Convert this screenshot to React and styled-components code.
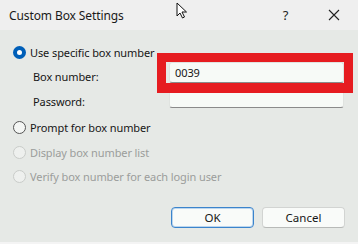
import React from "react";
import styled, { createGlobalStyle } from "styled-components";

const Global = createGlobalStyle`
  html, body { margin: 0; padding: 0; background: #f4f4f4; overflow: hidden; }
  body { font-family: "Noto Sans", "Open Sans", sans-serif; font-size: 11px; letter-spacing: -0.1px; color: #161616; }
`;

const Win = styled.div`
  position: relative;
  width: 372px;
  height: 242px;
  background: #e6e9e6;
  box-shadow: 0 1px 2px rgba(0, 0, 0, 0.25);
  display: flex;
  flex-direction: column;
`;

const TitleBar = styled.div`
  height: 30px;
  background: #efefef;
  display: flex;
  align-items: center;
  padding-left: 9px;
  box-sizing: border-box;
`;

const Title = styled.div`
  flex: 1;
  font-size: 12px;
  color: #1a1a1a;
  letter-spacing: -0.1px;
`;

const Caption = styled.div`
  width: ${(p) => p.$w}px;
  height: 30px;
  display: flex;
  align-items: center;
  justify-content: center;
  color: #222;
  font-size: 13px;
`;

const Body = styled.div`
  flex: 1;
  padding: 14px 0 0 13px;
  display: flex;
  flex-direction: column;
`;

const RadioRow = styled.label`
  display: flex;
  align-items: center;
  height: 16px;
  gap: 4px;
  margin-top: ${(p) => p.$mt || 0}px;
  color: ${(p) => (p.$disabled ? "#9b9d9b" : "#161616")};
`;

const Dot = styled.span`
  width: 13px;
  height: 13px;
  border-radius: 50%;
  box-sizing: border-box;
  flex: none;
  ${(p) =>
    p.$checked
      ? "border: 4px solid #005fb8; background: #fff;"
      : p.$disabled
      ? "border: 1px solid #c9ccc9; background: #eef0ee;"
      : "border: 1px solid #555; background: #f4f6f4;"}
`;

const Form = styled.div`
  display: grid;
  grid-template-columns: 136px 175px;
  grid-auto-rows: 21px;
  row-gap: 4px;
  margin: 2px 0 0 20px;
`;

const Label = styled.div`
  padding-top: 7px;
  line-height: 16px;
`;

const Input = styled.div`
  background: #f7faf7;
  border: 1px solid #e0e3e0;
  border-bottom: 1px solid #8a8a8a;
  border-radius: 3px;
  box-sizing: border-box;
  padding: 1px 0 0 5px;
  display: flex;
  align-items: center;
  line-height: 16px;
`;

const Footer = styled.div`
  margin-top: auto;
  display: flex;
  gap: 8px;
  padding: 0 0 14px 158px;
`;

const Button = styled.button`
  width: 83px;
  height: 21px;
  font: inherit;
  font-size: 11.5px;
  color: #161616;
  background: #f9fbf9;
  border: 1px solid ${(p) => (p.$default ? "#3b84cc" : "#d2d4d2")};
  box-shadow: ${(p) => (p.$default ? "inset 0 0 0 1px #bcd6ee" : "none")};
  border-bottom-color: ${(p) => (p.$default ? "#3b84cc" : "#b8bab8")};
  border-radius: 4px;
  padding: 0;
`;

const Highlight = styled.div`
  position: absolute;
  left: 157px;
  top: 53px;
  width: 196px;
  height: 40px;
  box-sizing: border-box;
  border: 9px solid #e61c20;
  border-bottom-width: 10px;
  pointer-events: none;
`;

const Pointer = styled.svg`
  position: absolute;
  left: 176px;
  top: 2px;
`;

export default function App() {
  return (
    <>
      <Global />
      <Win>
        <TitleBar>
          <Title>Custom Box Settings</Title>
          <Caption $w={51}>?</Caption>
          <Caption $w={46}>
            <svg width="12" height="12" viewBox="0 0 12 12">
              <path d="M1 1L11 11M11 1L1 11" stroke="#222" strokeWidth="1.1" />
            </svg>
          </Caption>
          <Caption $w={15} />
        </TitleBar>
        <Body>
          <RadioRow>
            <Dot $checked />
            Use specific box number
          </RadioRow>
          <Form>
            <Label>Box number:</Label>
            <Input>0039</Input>
            <Label>Password:</Label>
            <Input />
          </Form>
          <RadioRow $mt={11}>
            <Dot />
            Prompt for box number
          </RadioRow>
          <RadioRow $mt={9} $disabled>
            <Dot $disabled />
            Display box number list
          </RadioRow>
          <RadioRow $mt={8} $disabled>
            <Dot $disabled />
            Verify box number for each login user
          </RadioRow>
          <Footer>
            <Button $default>OK</Button>
            <Button>Cancel</Button>
          </Footer>
        </Body>
        <Highlight />
        <Pointer width="12" height="17" viewBox="0 0 12 17">
          <path
            d="M1 1V14L4 11L6.5 16L8.5 15L6 10H10.5Z"
            fill="#fff"
            stroke="#111"
            strokeWidth="1"
            strokeLinejoin="round"
          />
        </Pointer>
      </Win>
    </>
  );
}
